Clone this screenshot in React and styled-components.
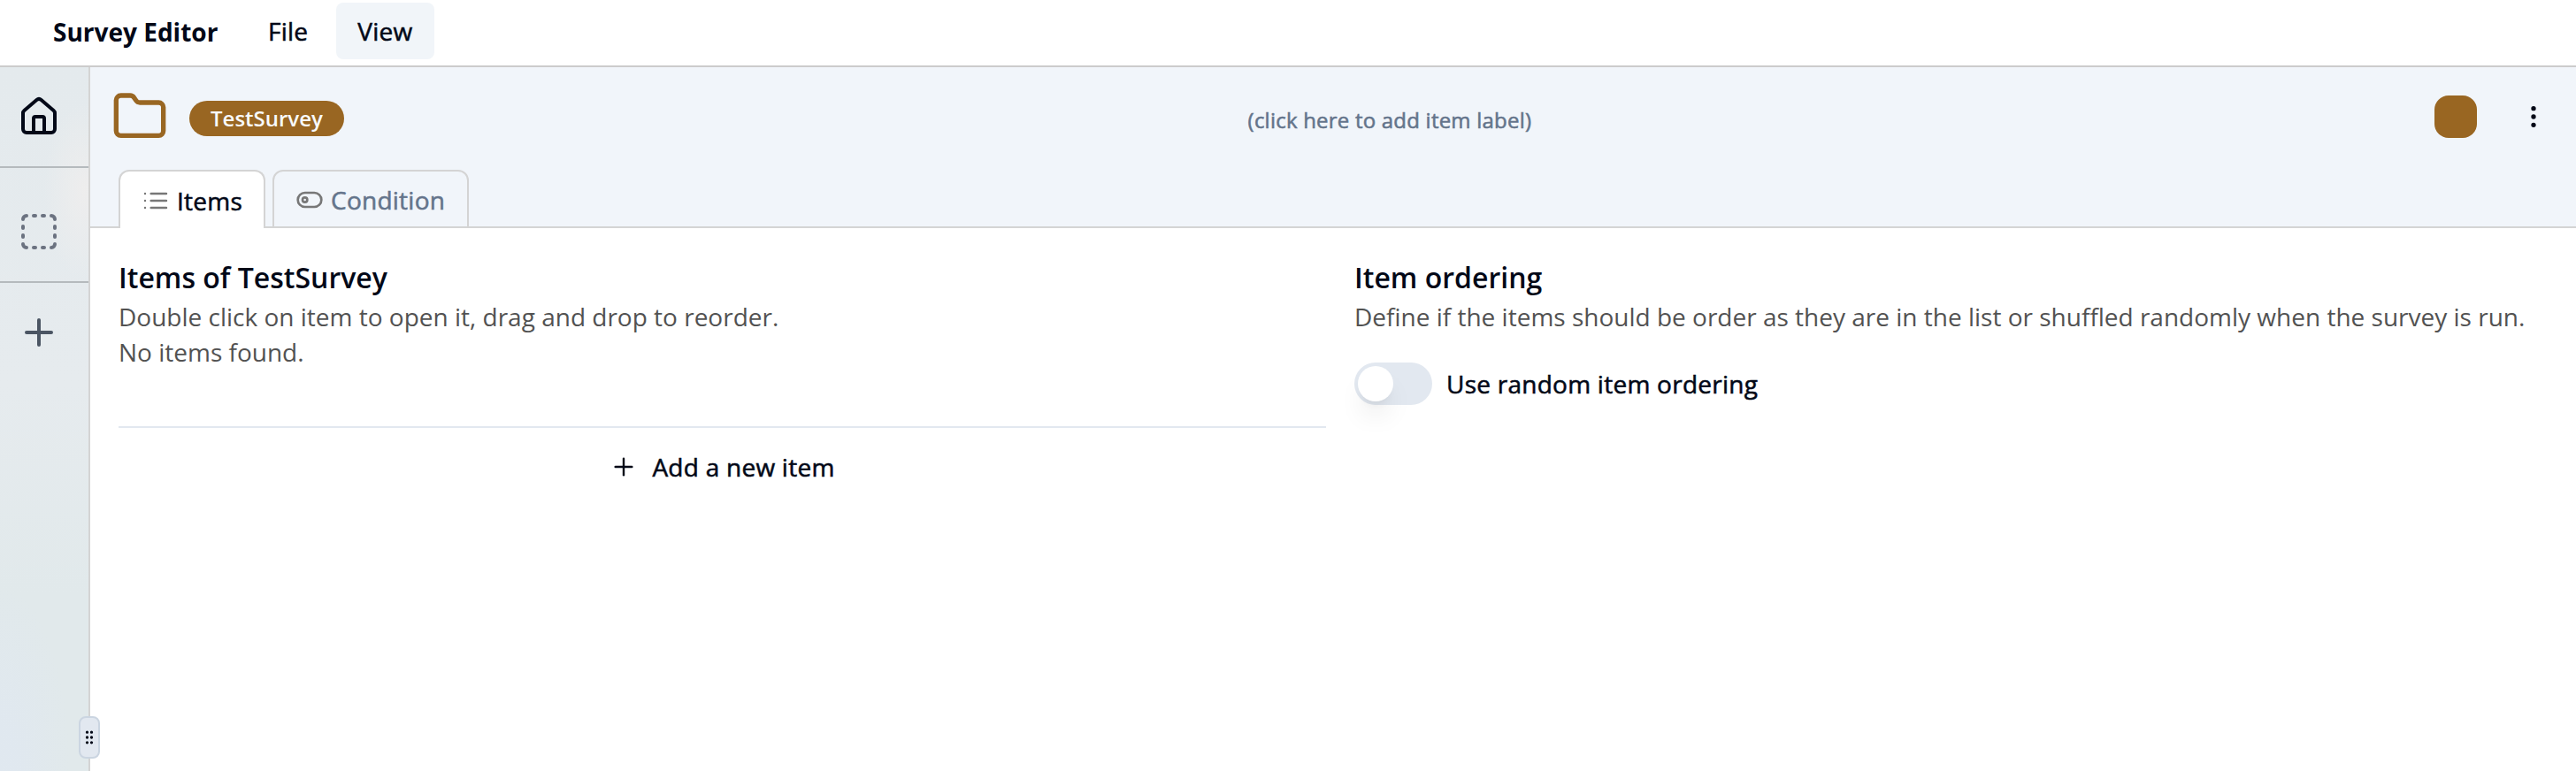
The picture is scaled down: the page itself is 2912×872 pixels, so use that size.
import React from "react";
import styled, { createGlobalStyle, css } from "styled-components";
import { House, SquareDashed, Plus, Folder, EllipsisVertical, GripVertical } from "lucide-react";

const GlobalStyle = createGlobalStyle`
  *, *::before, *::after { box-sizing: border-box; }
  body { margin: 0; background: #fff; color: #020817; font-family: "Open Sans", "Noto Sans", sans-serif; font-size: 28px; line-height: 40px; }
  h2, p { margin: 0; }
  button { font: inherit; color: inherit; border: 0; padding: 0; background: none; }
  svg { display: block; flex: none; }
`;
/* Open Sans ships without a medium cut here, so thicken the regular one. */
const medium = css`
  letter-spacing: 0.009em;
  -webkit-text-stroke: 0.55px currentColor;
`;
const Page = styled.div`
  display: flex; flex-direction: column; height: 872px; overflow: hidden;
`;
const MenuBar = styled.header`
  display: flex; align-items: flex-start; flex: none; height: 76px; padding: 3px 0 0 60px;
  border-bottom: 2px solid #ccc;
`;
const Brand = styled.div`
  font-weight: 700; line-height: 66px; width: 219px;
`;
const MenuItem = styled.button`
  height: 64px; padding: 0 24px; margin-right: 8px; border-radius: 8px; ${medium}
  background: ${(p) => (p.$open ? "#f1f5f9" : "transparent")};
`;
const Body = styled.div`
  display: flex; flex: 1; min-height: 0;
`;
const Sidebar = styled.nav`
  position: relative; flex: none; width: 102px; border-right: 2px solid #d4d4d4;
  background:
    radial-gradient(ellipse 45px 100px at 95px 140px, rgba(240, 238, 237, 0.8), transparent),
    radial-gradient(ellipse 80px 210px at 0 100%, rgba(224, 232, 240, 0.9) 25%, rgba(224, 232, 240, 0)),
    linear-gradient(#e4eaed, #e6ebee 45%, #e1e9eb 75%, #e1e9eb);
`;
const SideSection = styled.div`
  height: ${(p) => p.$height}px; padding: ${(p) => p.$top}px 0 0 20px; color: ${(p) => p.$color};
  border-bottom: ${(p) => (p.$last ? "0" : "2px solid #b5babd")};
`;
const Handle = styled.div`
  position: absolute; left: 89px; bottom: 14px; width: 24px; height: 48px; z-index: 1;
  display: flex; align-items: center; justify-content: center;
  border: 2px solid #cbd5e1; border-radius: 8px; background: #e2e8f0;
`;
const Main = styled.main`
  flex: 1; min-width: 0;
`;
const Header = styled.section`
  display: flex; flex-direction: column; justify-content: space-between; height: 182px; background: #f1f5fa;
  box-shadow: inset 0 -2px #d4d4d4;
`;
const TitleRow = styled.div`
  display: flex; align-items: center; height: 112px; padding: 0 32px 0 24px;
`;
const Badge = styled.span`
  margin: 4px 0 0 24px; height: 40px; padding: 0 24px; border-radius: 20px; line-height: 40px;
  background: #962; color: #f8fafc; font-size: 24px; font-weight: 600;
`;
const ItemLabel = styled.div`
  flex: 1; text-align: center; color: #64748b; font-size: 24px; ${medium} line-height: 32px; padding: 8px 0 0 1px;
`;
const Swatch = styled.button`
  width: 48px; height: 48px; border-radius: 16px; background: #962; margin-right: 48px;
`;
const Tabs = styled.div`
  display: flex; gap: 8px; padding-left: 32px;
`;
const Tab = styled.button`
  display: flex; align-items: center; gap: 8px; height: 66px; width: ${(p) => p.$width}px; padding: 2px 0 0 24px;
  border: 2px solid #d4d4d4; border-bottom-width: ${(p) => (p.$active ? 0 : 2)}px;
  border-radius: 12px 12px 0 0;
  background: ${(p) => (p.$active ? "#fff" : "transparent")};
  color: ${(p) => (p.$active ? "#020817" : "#64748b")}; ${medium}
  svg { color: #777; }
`;
const Columns = styled.div`
  display: grid; grid-template-columns: 1fr 1fr; gap: 32px; padding: 36px 16px 0 32px;
`;
const Heading = styled.h2`
  font-size: 32px; line-height: 40px; font-weight: 600; margin-bottom: 4px;
`;
const Description = styled.p`
  color: #525252; line-height: 40px; white-space: nowrap;
`;
const AddRow = styled.div`
  display: flex; justify-content: center; margin-top: 64px; padding-top: 24px; border-top: 2px solid #e2e8f0;
`;
const AddButton = styled.button`
  display: flex; align-items: center; gap: 16px; ${medium}
`;
const SwitchRow = styled.label`
  display: flex; align-items: center; gap: 16px; margin-top: 32px; ${medium}
`;
const SwitchTrack = styled.span`
  display: flex; align-items: center; width: 88px; height: 48px; padding: 4px; border-radius: 24px; background: #e2e8f0;
`;
const SwitchThumb = styled.span`
  width: 40px; height: 40px; border-radius: 50%; background: #fff;
  box-shadow: 0 20px 30px -6px rgba(0, 0, 0, 0.1), 0 8px 12px -8px rgba(0, 0, 0, 0.1);
`;

const ListIcon = () => (
  <svg width="32" height="32" viewBox="0 0 24 24" fill="none" stroke="currentColor" strokeWidth="1.8" strokeLinecap="round">
    <path d="M8 6h13M8 12h13M8 18h13M3 6h.01M3 12h.01M3 18h.01" />
  </svg>
);
const ToggleIcon = () => (
  <svg width="32" height="32" viewBox="0 0 24 24" fill="none" stroke="currentColor" strokeWidth="2">
    <rect x="2" y="6" width="20" height="12" rx="6" />
    <circle cx="8" cy="12" r="2" />
  </svg>
);

export default function App() {
  return (
    <Page>
      <GlobalStyle />
      <MenuBar>
        <Brand>Survey Editor</Brand>
        <MenuItem>File</MenuItem>
        <MenuItem $open>View</MenuItem>
      </MenuBar>
      <Body>
        <Sidebar>
          <SideSection $height={114} $top={32} $color="#020817"><House size={48} /></SideSection>
          <SideSection $height={130} $top={48} $color="#6b7280"><SquareDashed size={48} /></SideSection>
          <SideSection $height={112} $top={32} $color="#4b5563" $last><Plus size={48} /></SideSection>
          <Handle><GripVertical size={20} /></Handle>
        </Sidebar>
        <Main>
          <Header>
            <TitleRow>
              <Folder size={64} color="#962" />
              <Badge>TestSurvey</Badge>
              <ItemLabel>(click here to add item label)</ItemLabel>
              <Swatch aria-label="Item color" />
              <EllipsisVertical size={32} />
            </TitleRow>
            <Tabs>
              <Tab $active $width={166}><ListIcon />Items</Tab>
              <Tab $width={222}><ToggleIcon />Condition</Tab>
            </Tabs>
          </Header>
          <Columns>
            <section>
              <Heading>Items of TestSurvey</Heading>
              <Description>Double click on item to open it, drag and drop to reorder.</Description>
              <Description>No items found.</Description>
              <AddRow>
                <AddButton><Plus size={32} strokeWidth={1.8} />Add a new item</AddButton>
              </AddRow>
            </section>
            <section>
              <Heading>Item ordering</Heading>
              <Description>Define if the items should be order as they are in the list or shuffled randomly when the survey is run.</Description>
              <SwitchRow>
                <SwitchTrack><SwitchThumb /></SwitchTrack>
                Use random item ordering
              </SwitchRow>
            </section>
          </Columns>
        </Main>
      </Body>
    </Page>
  );
}
